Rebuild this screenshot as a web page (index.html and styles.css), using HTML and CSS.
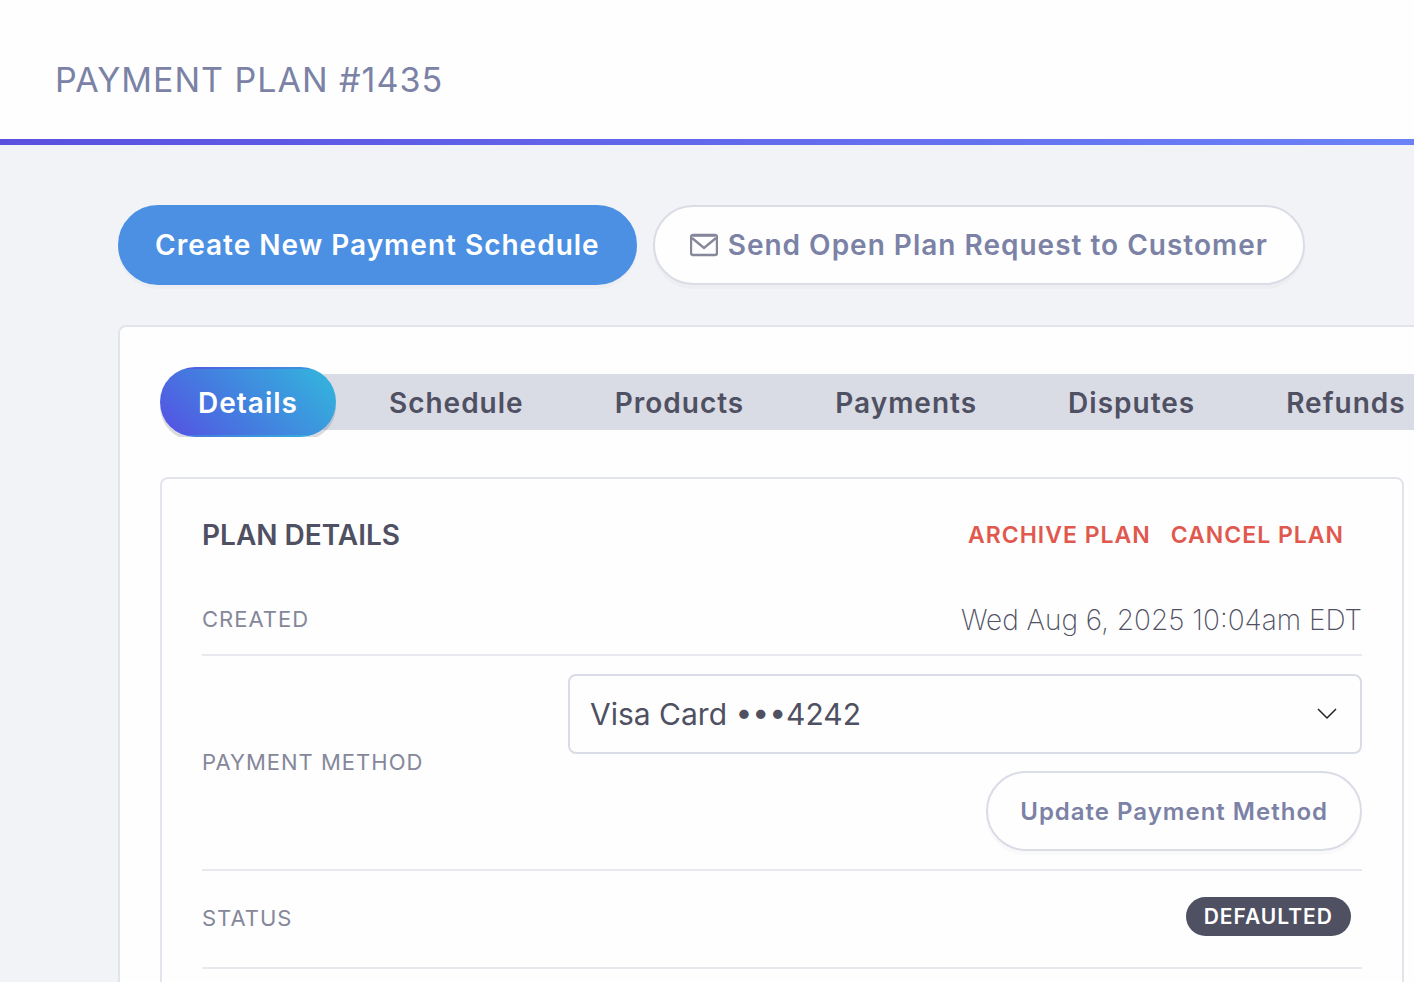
FILE: index.html
```html
<!DOCTYPE html>
<html lang="en">
<head>
  <meta charset="UTF-8">
  <meta name="viewport" content="width=device-width, initial-scale=1.0">
  <title>Payment Plan #1435</title>
  <link rel="stylesheet" href="styles.css">
</head>
<body>
  <header class="page-header">
    <h1>Payment Plan #1435</h1>
  </header>

  <main class="content">
    <div class="actions">
      <button type="button" class="btn btn-primary">Create New Payment Schedule</button>
      <button type="button" class="btn btn-outline">
        <svg class="icon" viewBox="0 0 28 24" aria-hidden="true">
          <rect x="1" y="2" width="26" height="20" rx="2"/>
          <path d="M3 2.5h22M2 5l12 10L26 5"/>
        </svg>
        Send Open Plan Request to Customer
      </button>
    </div>

    <section class="panel">
      <nav class="tabs">
        <a href="#details" class="tab active">Details</a>
        <a href="#schedule" class="tab">Schedule</a>
        <a href="#products" class="tab">Products</a>
        <a href="#payments" class="tab">Payments</a>
        <a href="#disputes" class="tab">Disputes</a>
        <a href="#refunds" class="tab">Refunds</a>
      </nav>

      <div class="card" id="details">
        <div class="card-header">
          <h2>Plan Details</h2>
          <div class="card-actions">
            <button type="button" class="link-danger">Archive Plan</button>
            <button type="button" class="link-danger">Cancel Plan</button>
          </div>
        </div>

        <div class="row row-created">
          <span class="label">Created</span>
          <span class="value">Wed Aug 6, 2025 10:04am EDT</span>
        </div>
        <div class="row row-method">
          <label class="label" for="method">Payment Method</label>
          <div class="method">
            <div class="select-wrap">
              <select id="method">
                <option>Visa Card •••4242</option>
              </select>
              <svg class="chevron" viewBox="0 0 20 12" aria-hidden="true">
                <path d="M1 1l9 9 9-9"/>
              </svg>
            </div>
            <button type="button" class="btn btn-outline btn-small">Update Payment Method</button>
          </div>
        </div>
        <div class="row row-status">
          <span class="label">Status</span>
          <span class="badge">Defaulted</span>
        </div>
      </div>
    </section>
  </main>
</body>
</html>
```
FILE: styles.css
```css
* {
  box-sizing: border-box;
}
body {
  margin: 0;
  height: 100vh;
  font-family: Inter, sans-serif;
  background-color: #f2f3f7;
  color: #4f5062;
  overflow: hidden;
}
h1, h2 {
  margin: 0;
  text-transform: uppercase;
}
button, select {
  font-family: inherit;
  cursor: pointer;
}
h1, .btn, .tab, .link-danger, .label, .badge {
  letter-spacing: 1px;
}
.page-header {
  background: linear-gradient(to right, #5b4fe0, #6a82f7) bottom / 100% 6px no-repeat #fefefe;
  padding: 60px 55px 45px;
}
h1 {
  font-size: 34px;
  font-weight: 400;
  line-height: 40px;
  color: #7b82a6;
}
.content {
  padding: 60px 0 0 118px;
}
.actions {
  display: flex;
  gap: 16px;
  margin-bottom: 40px;
}
.btn {
  display: flex;
  align-items: center;
  justify-content: center;
  gap: 10px;
  height: 80px;
  padding: 0 35px;
  border: 2px solid transparent;
  border-radius: 40px;
  font-size: 28px;
  font-weight: 600;
  white-space: nowrap;
  box-shadow: 0 4px 0 rgba(80, 80, 100, 0.03);
}
.btn-primary {
  background-color: #4c90e4;
  border-color: #4c90e4;
  color: #fff;
}
.btn-outline {
  background-color: #fefefe;
  border-color: #dadce6;
  color: #7b82a6;
}
.btn-small {
  padding: 0 32px;
  font-size: 24px;
}
.icon {
  width: 28px;
  height: 24px;
  fill: none;
  stroke: #85879a;
  stroke-width: 2.4;
}
.panel {
  margin-right: -32px;
  padding: 40px;
  background-color: #fefefe;
  border: 2px solid #e1e4ea;
  border-radius: 8px;
}
.tabs {
  display: flex;
  gap: 15px;
  height: 70px;
  margin: 0 -40px 40px 0;
  background: linear-gradient(#d9dbe5, #d9dbe5) 35px 7px / 100% 56px no-repeat;
  overflow: hidden;
}
.tab {
  padding: 0 38px;
  border: solid transparent;
  border-width: 2px 0;
  border-radius: 35px;
  font-size: 28px;
  font-weight: 600;
  line-height: 68px;
  color: #4f5062;
  text-decoration: none;
}
.tab.active {
  background-image: linear-gradient(45deg, #564fe3, #457be0 40%, #35aedd 90%);
  color: #fff;
  box-shadow: 0 4px 0 rgba(80, 80, 100, 0.2);
}
.card {
  padding: 36px 40px;
  border: 2px solid #e1e4ea;
  border-radius: 8px;
}
.card-header {
  display: flex;
  align-items: center;
  justify-content: space-between;
  height: 40px;
  margin-bottom: 30px;
}
h2 {
  font-size: 28px;
  font-weight: 600;
}
.card-actions {
  display: flex;
  gap: 20px;
  margin-right: 18px;
}
.link-danger {
  padding: 0;
  border: none;
  background: none;
  font-size: 23px;
  font-weight: 600;
  text-transform: uppercase;
  color: #e0584e;
}
.row {
  display: flex;
  align-items: center;
  justify-content: space-between;
  border-bottom: 2px solid #e8e9ef;
}
.row-created {
  height: 71px;
}
.row-method {
  padding: 18px 0;
}
.row-status {
  height: 98px;
}
.label {
  padding-bottom: 2px;
  font-size: 22px;
  text-transform: uppercase;
  color: #85879a;
}
.value {
  font-size: 28px;
  font-weight: 200;
}
.method {
  display: flex;
  flex-direction: column;
  align-items: flex-end;
  gap: 17px;
  width: 794px;
}
.select-wrap {
  position: relative;
  width: 100%;
}
select {
  width: 100%;
  height: 80px;
  padding: 0 20px;
  appearance: none;
  background-color: #fefefe;
  border: 2px solid #d9dce6;
  border-radius: 8px;
  font-size: 30px;
  color: #4f5062;
}
.chevron {
  position: absolute;
  top: 34px;
  right: 25px;
  width: 20px;
  height: 12px;
  fill: none;
  stroke: #222;
  stroke-width: 1.5;
  pointer-events: none;
}
.badge {
  margin: 0 11px 5px 0;
  padding: 0 18px;
  border-radius: 20px;
  background-color: #4f5062;
  color: #fff;
  font-size: 21px;
  font-weight: 600;
  line-height: 39px;
  text-transform: uppercase;
}
```
